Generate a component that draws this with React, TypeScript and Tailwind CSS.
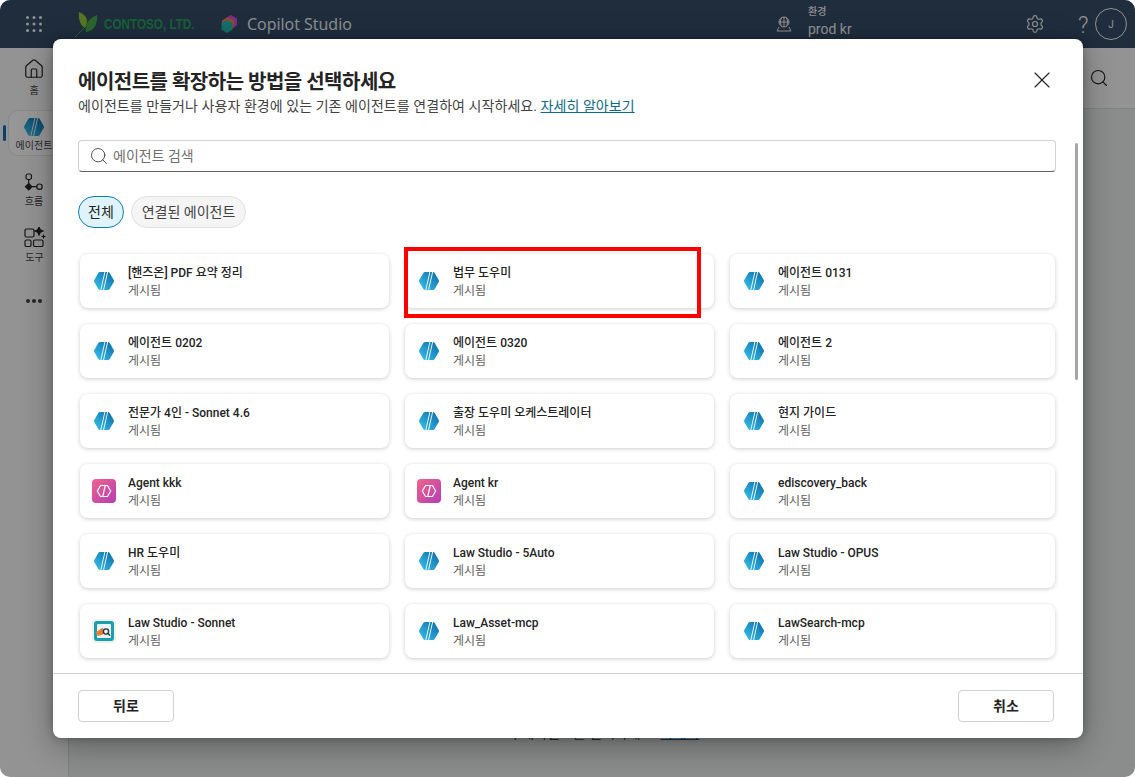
import type { ReactNode } from "react";
import { Search, X, House, Settings } from "lucide-react";

type Agent = { name: string; icon?: "blue" | "pink" | "law" };

const agents: Agent[] = [
  { name: "[핸즈온] PDF 요약 정리" },
  { name: "법무 도우미" },
  { name: "에이전트 0131" },
  { name: "에이전트 0202" },
  { name: "에이전트 0320" },
  { name: "에이전트 2" },
  { name: "전문가 4인 - Sonnet 4.6" },
  { name: "출장 도우미 오케스트레이터" },
  { name: "현지 가이드" },
  { name: "Agent kkk", icon: "pink" },
  { name: "Agent kr", icon: "pink" },
  { name: "ediscovery_back" },
  { name: "HR 도우미" },
  { name: "Law Studio - 5Auto" },
  { name: "Law Studio - OPUS" },
  { name: "Law Studio - Sonnet", icon: "law" },
  { name: "Law_Asset-mcp" },
  { name: "LawSearch-mcp" },
];

function HexIcon() {
  return (
    <svg width="20" height="20" viewBox="0 0 22 22">
      <defs>
        <linearGradient id="hexfill" x1="0" y1="1" x2="1" y2="0">
          <stop offset="0" stopColor="#38c4f0" />
          <stop offset="1" stopColor="#0b69a3" />
        </linearGradient>
      </defs>
      <path
        d="M6.400 1h9.200q1 0 1.500.9l4.600 8.100q.6 1 0 2l-4.600 8.100q-.5.9-1.500.9H6.400q-1 0-1.500-.9L.3 12q-.6-1 0-2l4.600-8.100q.5-.9 1.500-.9z"
        fill="url(#hexfill)"
      />
      <path d="M12 1 7.500 21M15 1 10.500 21" stroke="#fff" strokeWidth="1" fill="none" />
    </svg>
  );
}

function PinkIcon() {
  return (
    <svg width="24" height="24" viewBox="0 0 24 24">
      <defs>
        <linearGradient id="pinkfill" x1="0" y1="0" x2="1" y2="1">
          <stop offset="0" stopColor="#f0648c" />
          <stop offset="1" stopColor="#b63cb4" />
        </linearGradient>
      </defs>
      <rect width="24" height="24" rx="4" fill="url(#pinkfill)" />
      <path d="M8.500 6.500h7l3.200 5.500-3.200 5.500h-7L5.300 12z" fill="none" stroke="#fff" strokeWidth="1.2" strokeLinejoin="round" />
      <path d="M13.200 7 10.800 17" stroke="#fff" strokeWidth="1.2" />
    </svg>
  );
}

function LawIcon() {
  return (
    <svg width="24" height="24" viewBox="0 0 24 24">
      <rect width="24" height="24" rx="4" fill="#eef1f1" />
      <rect x="2" y="2" width="20" height="20" rx="3" fill="#1b9fb0" />
      <rect x="5" y="5" width="14" height="14" rx="1" fill="#e9f5f7" />
      <path d="M3.500 13.500 11 8.500v7l-5 1.500z" fill="#f07a2c" />
      <circle cx="14" cy="12.500" r="2.600" fill="none" stroke="#27323a" strokeWidth="1.4" />
      <path d="m16 14.500 2 2" stroke="#27323a" strokeWidth="1.4" />
    </svg>
  );
}

function AgentCard({ agent, selected }: { agent: Agent; selected: boolean }) {
  return (
    <div className="relative flex h-[54px] items-center rounded-lg bg-white pl-[12px] shadow-[0_1px_4px_rgba(0,0,0,0.2)]">
      <div className="flex w-[24px] justify-center">
        {agent.icon === "pink" ? <PinkIcon /> : agent.icon === "law" ? <LawIcon /> : <HexIcon />}
      </div>
      <div className="ml-[12px] flex flex-col pt-[2px]">
        <span className="text-[12px] leading-[18px] font-medium text-[#242424]">{agent.name}</span>
        <span className="text-[12px] leading-[18px] text-[#616161]">게시됨</span>
      </div>
      {selected && (
        <div className="absolute top-[-7px] left-[-1px] h-[71px] w-[297px] border-4 border-[#ff0000]" />
      )}
    </div>
  );
}

function SideItem({ icon, label, className }: { icon: ReactNode; label: string; className: string }) {
  return (
    <div className={`flex flex-col items-center ${className}`}>
      {icon}
      <span className="text-[10px] leading-[14px] text-[#424242]">{label}</span>
    </div>
  );
}

function TopBar() {
  return (
    <header className="flex h-[48px] shrink-0 items-center bg-[#344b66]">
      <svg className="ml-[26px]" width="16" height="16" viewBox="0 0 16 16" fill="#f2f2f2">
        {[1.5, 8, 14.5].flatMap((y) =>
          [1.5, 8, 14.5].map((x) => <circle key={`${x}-${y}`} cx={x} cy={y} r="1.5" />),
        )}
      </svg>
      <svg className="ml-[32px]" width="24" height="28" viewBox="0 0 24 28">
        <path d="M5 2c5 2 8 5 8 9 0 3-1 5-2 7C7 16 4 10 5 2z" fill="#8fc93f" />
        <path d="M23 5c1 9-3 16-11 17-2-7 3-14 11-17z" fill="#4aa84f" />
        <path d="M1 27c4-4 7-7 12-12" stroke="#4aa84f" strokeWidth="1" fill="none" />
      </svg>
      <div className="ml-[6px] w-[116px]">
        <span className="block origin-left scale-x-[0.78] font-['Liberation_Sans',sans-serif] text-[15px] font-bold whitespace-nowrap text-[#27a060]">
          CONTOSO, LTD.
        </span>
      </div>
      <svg width="18" height="18" viewBox="0 0 18 18">
        <path d="M11 0l6 3.500v7l-6 3.500-6-3.500v-7z" fill="#d04be0" />
        <path d="M8 2l6 3.500v7L8 16l-6-3.500v-7z" fill="#f07a4a" />
        <path d="M7 5l5.500 3v6.500L7 18l-5.500-3.500V8z" fill="#22b8b0" />
      </svg>
      <span className="ml-[9px] font-['Open_Sans',sans-serif] text-[16px] leading-[24px] font-medium text-[#f2f2f2]">
        Copilot Studio
      </span>
      <svg className="ml-auto" width="16" height="16" viewBox="0 0 16 16" fill="none" stroke="#f2f2f2" strokeWidth="1">
        <circle cx="8" cy="6" r="5" />
        <path d="M3 6h10M8 1v10M5.500 1.800c-1.400 2.600-1.400 5.800 0 8.400M10.500 1.800c1.400 2.600 1.400 5.800 0 8.400M3 11l-2 4h14l-2-4" />
      </svg>
      <div className="mb-[5px] ml-[16px] flex w-[217px] flex-col text-[#f2f2f2]">
        <span className="text-[10px] leading-[15px] font-medium">환경</span>
        <span className="text-[14px] leading-[20px]">prod kr</span>
      </div>
      <Settings className="text-[#f2f2f2]" size={20} strokeWidth={1.4} />
      <span className="mt-[4px] ml-[33px] w-[17px] text-[23px] leading-[28px] font-light text-[#f2f2f2]">?</span>
      <div className="mr-[8px] flex size-[32px] items-center justify-center rounded-full border border-[#f2f2f2] text-[10px] text-[#f2f2f2]">
        J
      </div>
    </header>
  );
}

function SideNav() {
  return (
    <aside className="relative flex w-[69px] shrink-0 flex-col items-center border-r border-[#d6d6d6] bg-[#f5f5f5] pt-[10px]">
      <SideItem
        className="gap-[4px]"
        icon={<House size={22} strokeWidth={1.3} className="text-[#242424]" />}
        label="홈"
      />
      <div className="absolute top-[77px] left-[3px] h-[16px] w-[3px] rounded bg-[#0f6cbd]" />
      <div className="mt-[12px] ml-[8px] flex h-[46px] w-[52px] shrink-0 flex-col items-center self-start rounded-[10px] border border-[#e5e5e5] bg-[#fafafa] pt-[6px]">
        <HexIcon />
        <span className="mt-[2px] text-[10px] leading-[13px] whitespace-nowrap text-[#424242]">에이전트</span>
      </div>
      <SideItem
        className="mt-[17px] gap-[2px]"
        icon={
          <svg width="20" height="20" viewBox="0 0 20 20" fill="none" stroke="#242424" strokeWidth="1.2">
            <rect x="2" y="1" width="5.500" height="5.500" rx="2" />
            <path d="M4.700 6.500v4" />
            <path d="M4.700 10.500l3.200 3.200-3.200 3.200-3.200-3.200z" fill="#242424" />
            <circle cx="15.500" cy="13.700" r="2.700" />
            <path d="M8 13.700h5" />
          </svg>
        }
        label="흐름"
      />
      <SideItem
        className="mt-[18px] ml-[1px] gap-[4px]"
        icon={
          <svg width="22" height="20" viewBox="0 0 22 20" fill="none" stroke="#242424" strokeWidth="1.2">
            <rect x="1" y="2" width="9" height="8" rx="1.500" />
            <rect x="1" y="13" width="6" height="6.500" rx="1.500" />
            <rect x="9.500" y="13" width="9.500" height="6.500" rx="1.500" />
            <path d="M15 0l1.200 2.800L19 4l-2.800 1.200L15 8l-1.200-2.800L11 4l2.800-1.200z" fill="#242424" />
            <path d="M19.500 7.500v4M17.500 9.500h4" />
          </svg>
        }
        label="도구"
      />
      <div className="mt-[34px] flex gap-[2px]">
        <span className="size-[4px] rounded-full bg-[#424242]" />
        <span className="size-[4px] rounded-full bg-[#424242]" />
        <span className="size-[4px] rounded-full bg-[#424242]" />
      </div>
    </aside>
  );
}

function Backdrop() {
  return (
    <div className="flex h-full flex-col">
      <TopBar />
      <div className="flex min-h-0 flex-1">
        <SideNav />
        <main className="flex flex-1 flex-col bg-[#e8ebeb]">
          <div className="flex h-[61px] items-center justify-end border-b border-[#d6d6d6] bg-[#f5f5f5] pr-[26px]">
            <Search size={20} strokeWidth={1.4} className="text-[#242424]" />
          </div>
          <div className="pt-[614px] text-center text-[14px] leading-[20px] text-[#424242]">
            이 에이전트를 선택하세요. <span className="text-[#115ea3] underline">자세히</span>
          </div>
        </main>
      </div>
    </div>
  );
}

export default function App() {
  return (
    <div className="relative h-[777px] w-[1135px] overflow-hidden bg-white font-['Roboto','Noto_Sans_CJK_KR',sans-serif]">
      <div className="h-full overflow-hidden rounded-[10px]">
        <Backdrop />
      </div>
      {/* dim layer over the page */}
      <div className="absolute inset-0 rounded-[10px] bg-black/40" />

      {/* dialog */}
      <div className="absolute top-[39px] left-[53px] flex h-[699px] w-[1030px] flex-col rounded-lg bg-white shadow-[0_0_8px_rgba(0,0,0,0.25),0_8px_32px_rgba(0,0,0,0.32)]">
        <div className="relative px-[25px] pt-[29px]">
          <h1 className="text-[20px] leading-[28px] font-semibold tracking-[-0.5px] text-[#242424]">
            에이전트를 확장하는 방법을 선택하세요
          </h1>
          <p className="text-[14px] leading-[20px] tracking-[0.06px] text-[#424242]">
            에이전트를 만들거나 사용자 환경에 있는 기존 에이전트를 연결하여 시작하세요.{" "}
            <span className="text-[#0f6b8c] underline">자세히 알아보기</span>
          </p>
          <X className="absolute top-[27px] right-[27px] text-[#242424]" size={28} strokeWidth={1} />
        </div>

        <div className="relative min-h-0 flex-1 overflow-hidden pt-[24px] pr-[27px] pl-[25px]">
          <div className="flex h-[32px] items-center rounded border border-[#d1d1d1] border-b-[#616161] pl-[10px]">
            <Search size={20} strokeWidth={1.1} className="text-[#424242]" />
            <span className="ml-[4px] text-[14px] text-[#707070]">에이전트 검색</span>
          </div>

          <div className="mt-[24px] flex gap-[7px]">
            <div className="flex h-[32px] w-[46px] items-center justify-center rounded-full border border-[#0f7fb0] bg-[#dff3fb] text-[14px] text-[#242424]">
              전체
            </div>
            <div className="flex h-[32px] w-[115px] items-center justify-center rounded-full border border-[#e0e0e0] bg-[#f5f5f5] text-[14px] text-[#424242]">
              연결된 에이전트
            </div>
          </div>

          <div className="mt-[26px] grid grid-cols-[309px_309px_325px] gap-[16px] pl-[2px]">
            {agents.map((agent) => (
              <AgentCard key={agent.name} agent={agent} selected={agent.name === "법무 도우미"} />
            ))}
          </div>

          <div className="absolute top-[27px] right-[5px] h-[237px] w-[3px] rounded bg-[#a6a6a6]" />
        </div>

        <div className="flex h-[65px] shrink-0 items-center justify-between border-t border-[#d1d1d1] pr-[29px] pl-[25px]">
          <button className="h-[32px] w-[96px] rounded border border-[#d1d1d1] bg-white text-[14px] font-semibold text-[#242424]">
            뒤로
          </button>
          <button className="h-[32px] w-[96px] rounded border border-[#d1d1d1] bg-white text-[14px] font-semibold text-[#242424]">
            취소
          </button>
        </div>
      </div>
    </div>
  );
}
